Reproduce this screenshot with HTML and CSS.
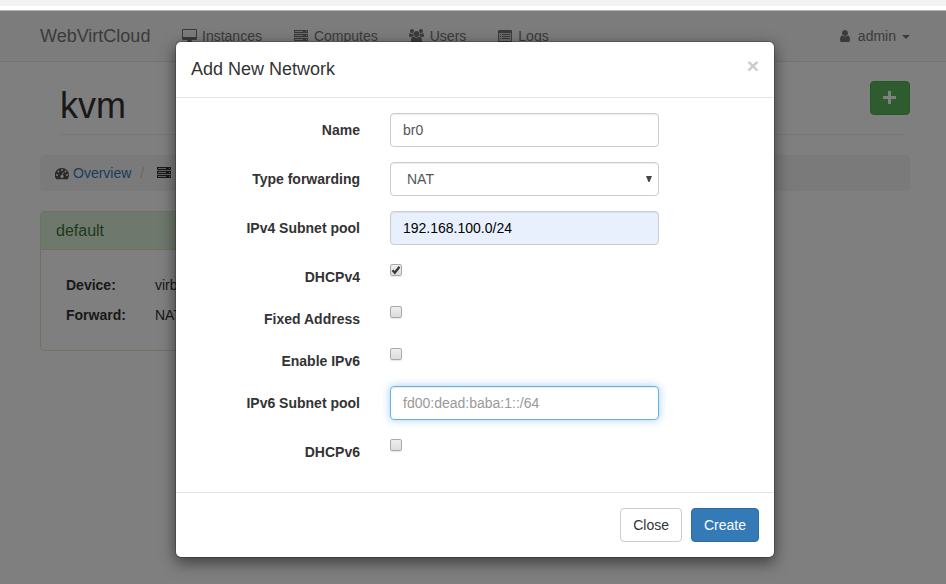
FILE: index.html
```html
<!DOCTYPE html>
<html lang="en">
<head>
<meta charset="utf-8">
<title>WebVirtCloud</title>
<link rel="stylesheet" href="styles.css">
</head>
<body>
<svg class="sprite" aria-hidden="true">
  <symbol id="server" viewBox="0 0 14 11">
    <path d="M0 0h14v11H0z" opacity=".25"/>
    <path fill-rule="evenodd" d="M0 0h14v3H0zM1 1v1h8V1zM12 1v1h1V1zM0 4h14v3H0zM1 5v1h8V5zM12 5v1h1V5zM0 8h14v3H0zM1 9v1h8V9zM12 9v1h1V9z"/>
  </symbol>
</svg>
<div class="browser-bar"></div>
<div class="viewport">
  <div class="page">
    <nav class="navbar">
      <a class="brand">WebVirtCloud</a>
      <ul class="nav">
        <li><svg class="icon desktop" viewBox="0 0 1920 1664"><path d="M1792 992v-832q0-13-9.5-22.5t-22.5-9.5h-1600q-13 0-22.5 9.5t-9.5 22.5v832q0 13 9.5 22.5t22.5 9.5h1600q13 0 22.5-9.5t9.5-22.5zm128-832v1088q0 66-47 113t-113 47h-544q0 37 16 77.5t32 71 16 43.5q0 26-19 45t-45 19h-512q-26 0-45-19t-19-45q0-14 16-44t32-70 16-78h-544q-66 0-113-47t-47-113v-1088q0-66 47-113t113-47h1600q66 0 113 47t47 113z"/></svg>Instances</li>
        <li><svg class="icon server"><use href="#server"/></svg>Computes</li>
        <li><svg class="icon users" viewBox="64 0 1920 1792"><path d="M657 896q-162 5-265 128h-134q-82 0-138-40.5t-56-118.5q0-353 124-353 6 0 43.5 21t97.5 42.5 119 21.5q67 0 133-23-5 37-5 66 0 139 81 256zm1071 637q0 120-73 189.5t-194 69.5h-874q-121 0-194-69.5t-73-189.5q0-53 3.5-103.5t14-109 26.5-108.5 43-97.5 62-81 85.5-53.5 111.5-20q10 0 43 21.5t73 48 107 48 135 21.5 135-21.5 107-48 73-48 43-21.5q61 0 111.5 20t85.5 53.5 62 81 43 97.5 26.5 108.5 14 109 3.5 103.5zm-1024-1277q0 106-75 181t-181 75-181-75-75-181 75-181 181-75 181 75 75 181zm704 384q0 159-112.5 271.5t-271.5 112.5-271.5-112.5-112.5-271.5 112.5-271.5 271.5-112.5 271.5 112.5 112.5 271.5zm576 225q0 78-56 118.5t-138 40.5h-134q-103-123-265-128 81-117 81-256 0-29-5-66 66 23 133 23 59 0 119-21.5t97.5-42.5 43.5-21q124 0 124 353zm-128-609q0 106-75 181t-181 75-181-75-75-181 75-181 181-75 181 75 75 181z"/></svg>Users</li>
        <li><svg class="icon logs" viewBox="0 0 14 12"><path fill-rule="evenodd" d="M1 0h12a1 1 0 0 1 1 1v10a1 1 0 0 1-1 1H1a1 1 0 0 1-1-1V1a1 1 0 0 1 1-1zM1 3v8h12V3zM2 4h1v1H2zM4 4h8v1H4zM2 6h1v1H2zM4 6h8v1H4zM2 8h1v1H2zM4 8h8v1H4z"/><path d="M1 3h12v8H1z" opacity=".25"/></svg>Logs</li>
      </ul>
      <div class="account"><svg class="icon user" viewBox="256 128 1280 1536"><path d="M1536 1399q0 109-62.5 187t-150.5 78h-854q-88 0-150.5-78t-62.5-187q0-85 8.5-160.5t31.5-152 58.5-131 94-89 134.5-34.5q131 128 313 128t313-128q76 0 134.5 34.5t94 89 58.5 131 31.5 152 8.5 160.5zm-256-887q0 159-112.5 271.5t-271.5 112.5-271.5-112.5-112.5-271.5 112.5-271.5 271.5-112.5 271.5 112.5 112.5 271.5z"/></svg>admin<span class="caret"></span></div>
    </nav>
    <main class="content">
      <header class="page-header">
        <h1>kvm</h1>
        <span class="add"><svg viewBox="0 0 13 13"><path d="M5 0h3v5h5v3H8v5H5V8H0V5h5z"/></svg></span>
      </header>
      <div class="breadcrumb">
        <svg class="icon dash" viewBox="0 0 14 12"><path fill-rule="evenodd" d="M7 0a7 7 0 0 1 7 7c0 1.500-.4 2.800-1.100 4-.1.200-.300.300-.500.300H1.600c-.2 0-.400-.1-.500-.3A7 7 0 0 1 7 0zM2 6a1 1 0 1 0 0 2 1 1 0 0 0 0-2zM3.500 2.500a1 1 0 1 0 0 2 1 1 0 0 0 0-2zM7 1a1 1 0 1 0 0 2 1 1 0 0 0 0-2zM10.500 2.500a1 1 0 1 0 0 2 1 1 0 0 0 0-2zM12 6a1 1 0 1 0 0 2 1 1 0 0 0 0-2zM7.900 4l-.8 3a1.500 1.500 0 1 0 .8.300l.8-3z"/></svg><a>Overview</a><span class="slash">/</span><svg class="icon server"><use href="#server"/></svg>
      </div>
      <section class="panel">
        <h3>default</h3>
        <dl>
          <dt>Device:</dt><dd>virbr0</dd>
          <dt>Forward:</dt><dd>NAT</dd>
        </dl>
      </section>
    </main>
  </div>
  <div class="backdrop">
    <form class="modal">
      <header class="modal-header"><h4>Add New Network</h4><span class="dismiss">×</span></header>
      <div class="modal-body">
        <div class="row"><label>Name</label><div class="control">br0</div></div>
        <div class="row"><label>Type forwarding</label><div class="control select">NAT<svg viewBox="0 0 6 6"><path d="M0 0h6L3.500 6h-1z"/></svg></div></div>
        <div class="row"><label>IPv4 Subnet pool</label><div class="control autofill">192.168.100.0/24</div></div>
        <div class="row short"><label>DHCPv4</label><span class="check"><svg viewBox="0 0 10 10"><path d="M1.500 5.200l2.300 2.500L8.500 1.800" fill="none" stroke="#333" stroke-width="2.200"/></svg></span></div>
        <div class="row short"><label>Fixed Address</label><span class="check"></span></div>
        <div class="row short"><label>Enable IPv6</label><span class="check"></span></div>
        <div class="row"><label>IPv6 Subnet pool</label><div class="control focused">fd00:dead:baba:1::/64</div></div>
        <div class="row short"><label>DHCPv6</label><span class="check"></span></div>
      </div>
      <footer class="modal-footer"><button type="button" class="btn">Close</button><button type="button" class="btn primary">Create</button></footer>
    </form>
  </div>
</div>
</body>
</html>
```
FILE: styles.css
```css
* { box-sizing: border-box; }
body {
  margin: 0;
  height: 584px;
  overflow: hidden;
  font: 14px/20px "Liberation Sans", Arial, sans-serif;
  color: #333;
  background: #fff;
}
h1, h3, h4, ul, dl, dd { margin: 0; padding: 0; font-weight: normal; }
.sprite { display: none; }
.browser-bar { height: 10px; background: #f1f3f4; border-bottom: 4px solid #fff; }
.viewport { position: relative; height: 574px; border-top: 1px solid #b6b4b6; overflow: hidden; }
.icon { flex: none; fill: currentColor; }

.navbar {
  display: flex;
  height: 51px;
  padding: 0 36px 0 40px;
  background: #f8f8f8;
  border-bottom: 1px solid #e7e7e7;
  color: #777;
  line-height: 50px;
}
.brand { width: 142px; font-size: 18px; }
.nav { display: flex; list-style: none; }
.nav li { display: flex; padding-right: 31px; }
.desktop { width: 15px; height: 13px; margin: 18px 5px 0 0; }
.nav .server { width: 14px; height: 11px; margin: 19px 6px 0 1px; }
.users { width: 15px; height: 14px; margin: 18px 6px 0 0; }
.logs { width: 14px; height: 12px; margin: 19px 6px 0 1px; }
.account { display: flex; margin-left: auto; }
.user { width: 10px; height: 12px; margin: 19px 8px 0 0; }
.caret { margin: 24px 0 0 6px; width: 8px; height: 4px; border: 4px solid transparent; border-top-color: currentColor; border-bottom: 0; }

.content { padding: 19px 36px 0 40px; }
.page-header { display: flex; justify-content: space-between; height: 54px; margin: 0 5px 0 20px; border-bottom: 1px solid #eee; }
.page-header h1 { font-size: 36px; line-height: 40px; margin-top: 5px; }
.add {
  display: flex;
  align-items: center;
  justify-content: center;
  width: 40px;
  height: 34px;
  margin-right: -5px;
  padding: 0 1px 1px 0;
  background: #5cb85c;
  border: 1px solid #4cae4c;
  border-radius: 4px;
}
.add svg { width: 13px; height: 13px; fill: #fff; }
.breadcrumb { display: flex; height: 36px; margin: 20px 0; padding: 8px 15px; background: #f5f5f5; border-radius: 4px; }
.dash { width: 14px; height: 12px; margin: 5px 4px 0 0; color: #555; }
.breadcrumb a { color: #337ab7; }
.slash { width: 26px; padding-left: 9px; color: #ccc; }
.breadcrumb .server { width: 14px; height: 11px; margin-top: 4px; }
.panel { width: 270px; height: 140px; border: 1px solid #d6e9c6; border-radius: 4px; }
.panel h3 { height: 38px; padding: 9px 15px 8px; font-size: 16px; color: #3c763d; background: #dff0d8; border-bottom: 1px solid #d6e9c6; }
.panel dl { display: grid; grid-template-columns: 89px 1fr; padding: 20px 25px; line-height: 30px; }
.panel dt { font-weight: bold; }

.backdrop { position: absolute; inset: 0; padding: 30px 172px 0 175px; background: rgba(0, 0, 0, .5); }
.modal {
  width: 600px;
  height: 517px;
  background: #fff;
  background-clip: padding-box;
  border: 1px solid rgba(0, 0, 0, .2);
  border-radius: 6px;
  box-shadow: 0 5px 15px rgba(0, 0, 0, .5);
}
.modal-header { display: flex; justify-content: space-between; height: 56px; padding: 15px; border-bottom: 1px solid #e5e5e5; }
.modal-header h4 { font-size: 18px; line-height: 25px; }
.dismiss { font-size: 21px; font-weight: bold; line-height: 17px; color: #ccc; }
.modal-body { height: 394px; padding-top: 15px; }
.row { display: flex; height: 34px; margin-bottom: 15px; }
.row.short { height: 27px; }
.row label { width: 184px; margin-right: 30px; padding-top: 7px; text-align: right; font-weight: bold; }
.control {
  width: 269px;
  height: 34px;
  padding: 6px 12px;
  color: #555;
  border: 1px solid #ccc;
  border-radius: 4px;
  box-shadow: inset 0 1px 1px rgba(0, 0, 0, .075);
}
.select { display: flex; justify-content: space-between; align-items: center; padding: 0 6px 0 16px; }
.select svg { width: 6px; height: 6px; fill: #444; }
.autofill { background: #e8f0fe; color: #000; }
.focused { color: #999; border-color: #66afe9; box-shadow: inset 0 1px 1px rgba(0, 0, 0, .075), 0 0 8px rgba(102, 175, 233, .6); }
.check {
  display: flex;
  width: 12px;
  height: 12px;
  margin-top: 4px;
  border: 1px solid #aaa;
  border-radius: 2px;
  background: linear-gradient(#eee, #dcdcdc);
  box-shadow: 0 1px 1px rgba(0, 0, 0, .1);
}
.modal-footer { display: flex; justify-content: flex-end; gap: 9px; padding: 15px; border-top: 1px solid #e5e5e5; }
.btn { height: 34px; padding: 6px 12px; font: inherit; color: #333; background: #fff; border: 1px solid #ccc; border-radius: 4px; }
.primary { color: #fff; background: #337ab7; border-color: #2e6da4; }
```
